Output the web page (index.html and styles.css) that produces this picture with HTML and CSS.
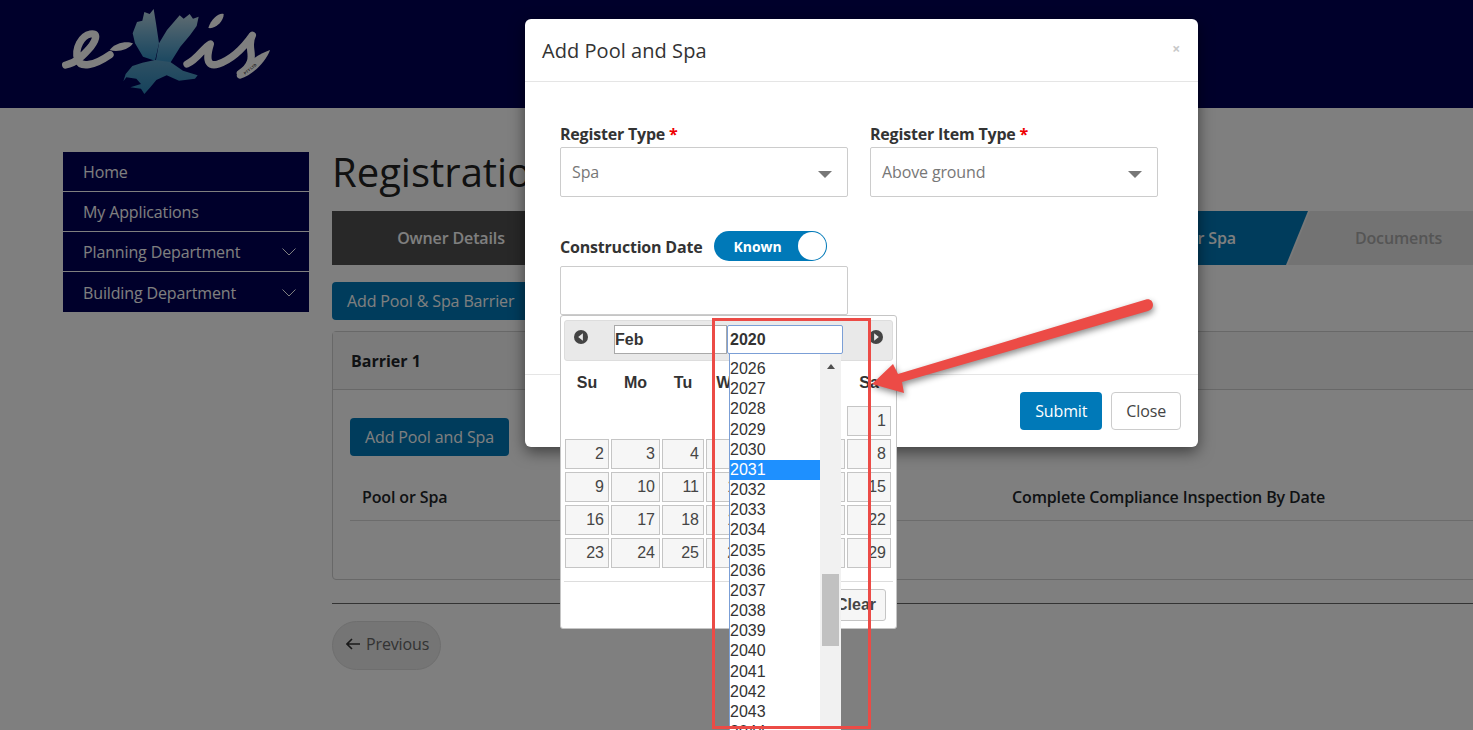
FILE: index.html
```html
<!DOCTYPE html>
<html lang="en">
<head>
<meta charset="utf-8">
<title>Add Pool and Spa</title>
<link rel="stylesheet" href="styles.css">
</head>
<body>
<header class="topbar">
  <svg class="logo" viewBox="0 0 675 315" width="225" height="105" aria-label="e-Xis logo">
    <defs>
      <linearGradient id="bird" x1="0" y1="0" x2="0" y2="1">
        <stop offset="0" stop-color="#bcd6e2"/>
        <stop offset="0.5" stop-color="#72b0d2"/>
        <stop offset="1" stop-color="#2f8cc0"/>
      </linearGradient>
      <linearGradient id="birdBody" x1="0" y1="0" x2="0" y2="1">
        <stop offset="0" stop-color="#5ea2c8"/>
        <stop offset="1" stop-color="#2a85b8"/>
      </linearGradient>
    </defs>
    <g class="logo-script">
      <path d="M32 195C62 190 84 168 108 140C126 116 128 98 106 102C80 107 58 145 68 178C76 204 116 198 165 164"/>
      <path d="M396 192C428 178 446 142 466 132C456 165 450 204 490 192C530 178 568 140 592 106C576 134 596 160 586 186C580 204 566 214 556 220"/>
    </g>
    <g class="logo-fill">
      <path d="M164 150C180 128 215 122 234 130C222 150 185 158 164 150Z"/>
      <path d="M460 84C468 55 495 36 506 42C507 62 482 88 460 84Z"/>
      <path d="M545 226C570 188 615 160 645 150C632 188 590 226 556 236C549 237 545 232 545 226Z"/>
    </g>
    <text class="logo-tag" transform="translate(570 224) rotate(-38)">PTY LTD</text>
    <path fill="url(#bird)" d="M233 100L246 66L262 62L268 36L284 42L296 27L303 70L312 130L300 182L264 170L240 130Z"/>
    <path fill="url(#bird)" d="M312 130L336 90L374 46L386 56L404 42L414 56L431 50L425 78L405 106L376 140L346 188L300 196Z"/>
    <path fill="url(#birdBody)" d="M205 244L212 222L232 198L262 188L300 180L346 186L384 212L428 226L420 236L372 242L335 226L304 240L286 262L268 282L258 266L226 262L258 252L244 236L214 232Z"/>
  </svg>
</header>

<div class="page">
  <nav class="sidebar">
    <a class="side-item">Home</a>
    <a class="side-item">My Applications</a>
    <a class="side-item">Planning Department<svg class="chev" viewBox="0 0 14 8"><path d="M.5.5 7 7 13.500.5"/></svg></a>
    <a class="side-item">Building Department<svg class="chev" viewBox="0 0 14 8"><path d="M.5.5 7 7 13.500.5"/></svg></a>
  </nav>
  <main class="main">
    <h1 class="title">Registration</h1>
    <div class="wizard">
      <div class="step step-done">Owner Details</div>
      <div class="step-edge"><div class="step step-active">Pool or Spa</div></div>
      <div class="step step-todo">Documents</div>
    </div>
    <button class="btn btn-primary btn-barrier">Add Pool &amp; Spa Barrier</button>
    <section class="card">
      <div class="card-head">Barrier 1</div>
      <div class="card-body">
        <button class="btn btn-primary btn-block">Add Pool and Spa</button>
        <div class="table-head"><span>Pool or Spa</span><span>Complete Compliance Inspection By Date</span></div>
      </div>
    </section>
    <hr class="rule">
    <button class="btn-prev"><svg class="prev-icon" viewBox="0 0 14 12"><path d="M6 1 1 6l5 5M1 6h13"/></svg>Previous</button>
  </main>
</div>

<div class="backdrop"></div>

<div class="modal">
  <div class="modal-head">
    <h2 class="modal-title">Add Pool and Spa</h2>
    <span class="modal-x">×</span>
  </div>
  <div class="modal-body">
    <div class="form-row">
      <div class="field">
        <label class="label">Register Type <span class="req">*</span></label>
        <div class="select">Spa<i class="caret"></i></div>
      </div>
      <div class="field">
        <label class="label">Register Item Type <span class="req">*</span></label>
        <div class="select">Above ground<i class="caret"></i></div>
      </div>
    </div>
    <div class="date-label">
      <label class="label">Construction Date</label>
      <div class="toggle"><span>Known</span><i class="knob"></i></div>
    </div>
    <div class="date-field">
      <div class="date-input"></div>
      <div class="picker">
        <div class="picker-head">
          <svg class="nav-icon" viewBox="0 0 15 15"><circle cx="7.500" cy="7.500" r="7.500"/><path class="nav-tri" d="M9.500 3.500v8l-5-4z"/></svg>
          <div class="month-box">Feb</div>
          <div class="year-box">2020</div>
          <svg class="nav-icon nav-next" viewBox="0 0 15 15"><circle cx="7.500" cy="7.500" r="7.500"/><path class="nav-tri" d="M5.500 3.500v8l5-4z"/></svg>
        </div>
        <div class="cal-grid cal-days">
          <span>Su</span><span>Mo</span><span>Tu</span><span>We</span><span>Th</span><span>Fr</span><span>Sa</span>
        </div>
        <div class="cal-grid cal-dates">
          <b class="blank"></b><b class="blank"></b><b class="blank"></b><b class="blank"></b><b class="blank"></b><b class="blank"></b><b>1</b>
          <b>2</b><b>3</b><b>4</b><b>5</b><b>6</b><b>7</b><b>8</b>
          <b>9</b><b>10</b><b>11</b><b>12</b><b>13</b><b>14</b><b>15</b>
          <b>16</b><b>17</b><b>18</b><b>19</b><b>20</b><b>21</b><b>22</b>
          <b>23</b><b>24</b><b>25</b><b>26</b><b>27</b><b>28</b><b>29</b>
        </div>
        <div class="picker-foot"><button class="clear">Clear</button></div>
        <div class="year-list">
          <ul class="years">
            <li>2026</li><li>2027</li><li>2028</li><li>2029</li><li>2030</li>
            <li class="sel">2031</li>
            <li>2032</li><li>2033</li><li>2034</li><li>2035</li><li>2036</li><li>2037</li>
            <li>2038</li><li>2039</li><li>2040</li><li>2041</li><li>2042</li><li>2043</li><li>2044</li>
          </ul>
          <div class="scroll"><i class="scroll-up"></i><i class="scroll-thumb"></i></div>
        </div>
      </div>
    </div>
  </div>
  <div class="modal-foot">
    <button class="btn btn-primary">Submit</button>
    <button class="btn btn-light">Close</button>
  </div>
</div>

<div class="mark-rect"></div>
<svg class="mark-arrow" viewBox="0 0 1473 730" width="1473" height="730">
  <path d="M872 384 893 364 898 374 1146 299.500C1150 298.500 1153 301 1153 305C1153 308 1151 310 1148 311L902 382 904 393Z"/>
</svg>
</body>
</html>
```

FILE: styles.css
```css
* { box-sizing: border-box; }
html, body { margin: 0; height: 730px; overflow: hidden; }
body {
  position: relative;
  background: #fff;
  color: #212529;
  font: 16px/1.5 "Open Sans", "Liberation Sans", sans-serif;
  letter-spacing: -.13px;
}
button { font: inherit; letter-spacing: inherit; cursor: pointer; }

.topbar { height: 108px; background: #000056; padding-left: 55px; }
.logo { display: block; }
.logo-script path { fill: none; stroke: #fff; stroke-width: 22; stroke-linecap: round; stroke-linejoin: round; }
.logo-fill path { fill: #fff; }
.logo-tag { font: bold 11px "Liberation Sans", sans-serif; fill: #222; letter-spacing: 0; }

.page { display: flex; padding: 44px 0 0 63px; }
.sidebar { width: 246px; height: 160px; flex: none; background: #000056; }
.side-item {
  display: flex; align-items: center; justify-content: space-between;
  height: 40px; padding: 0 13px 0 20px;
  color: #fff; border-bottom: 1px solid #fff;
}
.side-item:last-child { border-bottom: 0; height: 41px; }
.chev { width: 14px; height: 8px; fill: none; stroke: #fff; stroke-width: 1; }

.main { flex: 1; min-width: 0; margin-left: 23px; }
.title { margin: 0 0 19px; font-size: 40px; line-height: 40px; font-weight: 400; color: #222; letter-spacing: 0; }

.wizard { display: flex; height: 54px; margin-bottom: 17px; background: #e6e6e6; font-weight: 600; }
.step { display: flex; align-items: center; justify-content: center; height: 54px; }
.step-done { width: 238px; background: #505050; color: #fff; }
.step-edge {
  width: 740px; flex: none; background: #f2f2f2;
  clip-path: polygon(0 0, 100% 0, calc(100% - 22px) 100%, 0 100%);
}
.step-active {
  width: 738px; padding-right: 72px; justify-content: flex-end; background: #0079b8; color: #fff;
  clip-path: polygon(0 0, 100% 0, calc(100% - 22px) 100%, 0 100%);
}
.step-todo { flex: 1; padding-left: 14px; color: #aaa; }

.btn { height: 38px; padding: 0 14px; border: 1px solid transparent; border-radius: 4px; }
.btn-primary { background: #0079b8; color: #fff; }
.btn-light { background: #fff; color: #444; border-color: #ccc; }
.btn-barrier { display: block; margin-bottom: 11px; }
.btn-block { display: block; }

.card { height: 249px; margin-right: -10px; border: 1px solid #d0d0d0; border-radius: 4px; }
.card-head { height: 58px; padding: 1px 18px 0; display: flex; align-items: center; background: #f7f7f7; border-bottom: 1px solid #d0d0d0; font-weight: 700; letter-spacing: 0; }
.card-body { padding: 28px 0 0 17px; }
.table-head { display: grid; grid-template-columns: 650px 1fr; margin-top: 29px; height: 36px; padding-left: 12px; border-bottom: 1px solid #d8d8d8; font-weight: 600; }
.rule { margin: 23px 0 17px; border: 0; border-top: 1px solid #666; }
.btn-prev {
  display: flex; align-items: center; gap: 6px; width: 109px; height: 49px; padding: 0 0 3px 13px;
  background: #eaeaea; color: #666; border: 1px solid #ddd; border-radius: 25px;
}
.prev-icon { width: 14px; height: 12px; fill: none; stroke: #333; stroke-width: 1.600; }

.backdrop { position: absolute; inset: 0; background: rgba(0, 0, 0, .5); }

.modal {
  position: absolute; left: 525px; top: 19px; width: 673px; height: 428px;
  background: #fff; border-radius: 6px; box-shadow: 0 5px 15px rgba(0, 0, 0, .5);
}
.modal-head { display: flex; justify-content: space-between; align-items: center; height: 63px; padding: 2px 17px 0; border-bottom: 1px solid #e5e5e5; }
.modal-title { margin: 0; font-size: 20px; font-weight: 400; color: #333; letter-spacing: .05px; }
.modal-x { color: #c8c8c8; font-size: 14px; font-weight: 700; margin: -6px 1px 0 0; }
.modal-body { height: 292px; padding: 40px 0 0 35px; }
.form-row { display: flex; gap: 22px; }
.field { width: 288px; }
.label { display: block; height: 25px; line-height: 25px; font-weight: 700; color: #333; letter-spacing: -.2px; }
.req { color: #e00; }
.select {
  display: flex; align-items: center; justify-content: space-between;
  height: 50px; padding: 0 15px 0 11px; color: #777;
  border: 1px solid #ccc; border-radius: 2px;
}
.caret { width: 0; height: 0; margin-top: 5px; border: 7.500px solid transparent; border-top: 7px solid #777; border-bottom: 0; }
.date-label { display: flex; align-items: center; gap: 12px; height: 30px; margin-top: 34px; }
.date-label .label { margin-top: 2px; }
.toggle {
  display: flex; align-items: center; justify-content: space-between;
  width: 113px; height: 30px; padding: 0 1px 0 19px;
  background: #0079b8; border-radius: 15px;
  color: #fff; font-size: 14px; font-weight: 700; letter-spacing: 0;
}
.knob { width: 28px; height: 28px; background: #fff; border-radius: 50%; }
.date-field { position: relative; width: 288px; margin-top: 5px; }
.date-input { height: 49px; border: 1px solid #ccc; border-radius: 2px; }

.picker {
  position: absolute; left: 0; top: 100%; width: 337px; height: 314px; padding: 4px 3px;
  background: #fff; border: 1px solid #c5c5c5; border-radius: 3px;
  font-family: "Liberation Sans", Arial, sans-serif; color: #333; letter-spacing: 0;
}
.picker-head {
  display: flex; align-items: flex-start; width: 329px; height: 41px; padding: 4px 9px;
  background: #e9e9e9; border: 1px solid #ddd; border-radius: 3px;
}
.nav-icon { width: 14px; height: 14px; flex: none; margin-top: 5px; fill: #444; }
.nav-tri { fill: #e9e9e9; }
.nav-next { margin-left: 26px; }
.month-box, .year-box { height: 29px; line-height: 27px; font-weight: 700; background: #fff; padding-left: 0; }
.month-box { width: 113px; margin-left: 26px; border: 1px solid #a9a9a9; }
.year-box { width: 116px; padding-left: 2px; border: 1px solid #7b9fd6; border-radius: 2px; }
.cal-grid { display: grid; grid-template-columns: 44px 49px 42px 44px 44px 47px 44px; column-gap: 2px; margin-left: 1px; }
.cal-days { height: 30px; margin-top: 6px; padding-top: 1px; line-height: 30px; text-align: center; font-weight: 700; }
.cal-dates { grid-auto-rows: 30px; row-gap: 3px; margin-top: 9px; }
.cal-dates b {
  display: block; padding-right: 4px; text-align: right; font-weight: 400; line-height: 28px; color: #454545;
  background: #f6f6f6; border: 1px solid #c5c5c5;
}
.cal-dates .blank { visibility: hidden; }
.picker-foot { display: flex; justify-content: flex-end; width: 329px; height: 50px; margin-top: 13px; padding: 7px 7px 0 0; border-top: 1px solid #ddd; }
.clear { width: 60px; height: 32px; padding: 0; font-weight: 700; color: #454545; background: #f6f6f6; border: 1px solid #c5c5c5; border-radius: 3px; font-family: inherit; }

.year-list {
  position: absolute; left: 168px; top: 38px; display: flex; width: 112px; height: 377px;
  background: #fff; border-left: 1px solid #7b9fd6; overflow: hidden;
}
.years { width: 90px; margin: 0; padding: 5px 0 0; list-style: none; }
.years li { height: 20.180px; line-height: 20px; color: #333; }
.years .sel { background: #1e90ff; color: #fff; }
.scroll { display: flex; flex-direction: column; align-items: center; width: 21px; background: #f1f1f1; }
.scroll-up { width: 0; height: 0; margin-top: 10px; border: 4px solid transparent; border-bottom: 5px solid #505050; border-top: 0; }
.scroll-thumb { width: 17px; height: 72px; margin-top: 205px; background: #c1c1c1; }

.modal-foot { display: flex; justify-content: flex-end; gap: 9px; padding: 17px 17px 0; border-top: 1px solid #e5e5e5; }

.mark-rect { position: absolute; left: 712px; top: 318px; width: 159px; height: 411px; border: 3px solid #ec4b46; }
.mark-arrow { position: absolute; left: 0; top: 0; pointer-events: none; }
.mark-arrow path { fill: #ec4b46; filter: drop-shadow(1px 3px 3px rgba(0, 0, 0, .45)); }
```
